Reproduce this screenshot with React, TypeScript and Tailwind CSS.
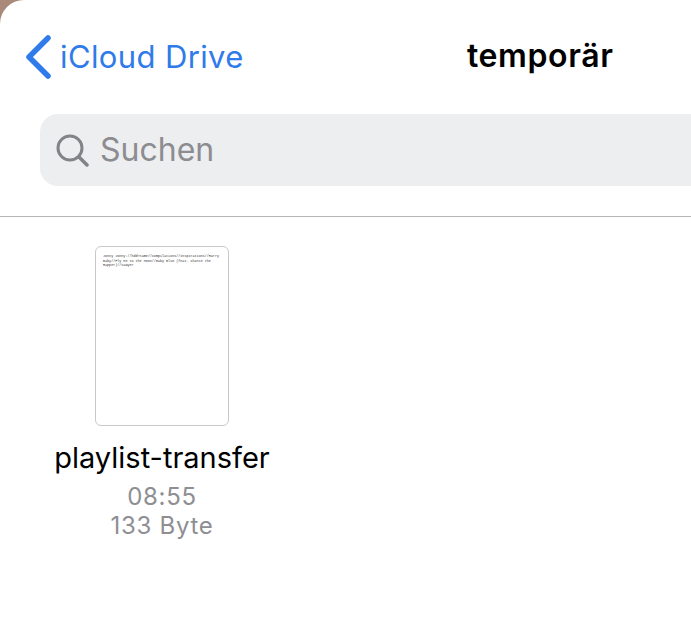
export default function App() {
  return (
    <main className="relative h-[641px] w-[691px] overflow-hidden bg-white font-['Inter',sans-serif]">
      {/* wallpaper peeking behind the rounded sheet */}
      <div className="absolute left-0 top-0 h-6 w-6 bg-[#a98a7a]">
        <div className="h-full w-full rounded-tl-[24px] bg-white" />
      </div>

      <header className="relative flex h-[114px] items-center">
        <div className="flex items-center pl-[25px] text-[#2f7bea]">
          <svg width="26" height="44" viewBox="0 0 26 44" fill="none" className="mr-[9px]">
            <path
              d="M23 3 L4 22 L23 41"
              stroke="#2f7bea"
              strokeWidth="5.5"
              strokeLinecap="round"
              strokeLinejoin="round"
            />
          </svg>
          <span className="pb-[2px] text-[31px] leading-none tracking-[0.38px]">iCloud Drive</span>
        </div>
        <h1 className="absolute left-[467px] top-[38px] text-[32px] font-semibold leading-9 tracking-[0.6px] text-black">
          temporär
        </h1>
      </header>

      <div className="pl-10">
        <div className="flex h-[72px] w-[680px] items-center rounded-l-[18px] bg-[#edeef0] pl-[15px]">
          <svg width="34" height="34" viewBox="0 0 34 34" fill="none">
            <circle cx="15" cy="15" r="12" stroke="#838387" strokeWidth="3" />
            <path d="M24 24 L32 32" stroke="#838387" strokeWidth="3.5" strokeLinecap="round" />
          </svg>
          <span className="ml-[11px] text-[32px] leading-none text-[#8c8c91]">Suchen</span>
        </div>
      </div>

      <div className="mt-[30px] h-px bg-[#b5b5b5]" />

      <section className="flex w-[324px] flex-col items-center pt-[29px]">
        <div className="h-[180px] w-[134px] rounded-[6px] border border-[#c9c9c9] bg-white px-[7px] pt-[7px]">
          <p className="font-['Liberation_Mono',monospace] text-[3.4px] leading-[4.6px] text-[#333]">
            Jonny Jonny://hdd?name//Compilations//Inspirations//Harry Baby//Fly Me to the Moon//Baby Blue (feat. Chance the Rapper)//Sawyer
          </p>
        </div>
        <p className="mt-[14px] text-[29px] leading-9 text-black">playlist-transfer</p>
        <p className="mt-[6px] text-[24px] leading-[29px] tracking-[0.7px] text-[#8e8e93]">08:55</p>
        <p className="text-[24px] leading-[29px] tracking-[0.7px] text-[#8e8e93]">133 Byte</p>
      </section>
    </main>
  );
}
